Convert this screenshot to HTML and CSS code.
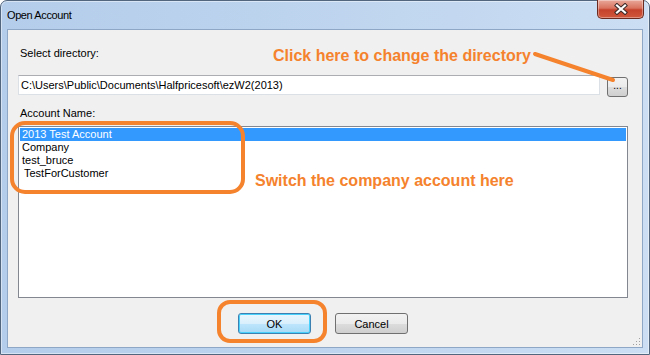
FILE: index.html
```html
<!DOCTYPE html>
<html lang="en">
<head>
    <meta charset="UTF-8">
    <title>Open Account</title>
    <link rel="stylesheet" href="styles.css">
</head>
<body>
    <div class="window">
        <div class="titlebar">
            <span class="title">Open Account</span>
            <button class="close" aria-label="Close">
                <svg width="16" height="12" viewBox="0 0 16 12">
                    <path d="M4 2.5 L12 9.5 M12 2.5 L4 9.5" stroke="#3d2a28" stroke-width="4.2" stroke-linecap="square" fill="none"/>
                    <path d="M4 2.5 L12 9.5 M12 2.5 L4 9.5" stroke="#ffffff" stroke-width="2.2" stroke-linecap="square" fill="none"/>
                </svg>
            </button>
        </div>

        <div class="client">
            <label class="label">Select directory:</label>
            <div class="dir-row">
                <div class="textbox">C:\Users\Public\Documents\Halfpricesoft\ezW2(2013)</div>
                <button class="browse">...</button>
            </div>

            <label class="label label-account">Account Name:</label>
            <ul class="listbox">
                <li class="selected">2013 Test Account</li>
                <li>Company</li>
                <li>test_bruce</li>
                <li class="indent">TestForCustomer</li>
            </ul>

            <div class="actions">
                <button class="btn btn-default">OK</button>
                <button class="btn">Cancel</button>
            </div>

            <svg class="grip" width="9" height="9" viewBox="0 0 9 9">
                <rect x="7" y="1" width="1" height="1" fill="#a0a0a0"/>
                <rect x="4" y="4" width="1" height="1" fill="#a0a0a0"/>
                <rect x="7" y="4" width="1" height="1" fill="#a0a0a0"/>
                <rect x="1" y="7" width="1" height="1" fill="#a0a0a0"/>
                <rect x="4" y="7" width="1" height="1" fill="#a0a0a0"/>
                <rect x="7" y="7" width="1" height="1" fill="#a0a0a0"/>
            </svg>
        </div>

        <!-- orange callouts drawn over the dialog -->
        <div class="note note-dir">Click here to change the directory</div>
        <div class="note note-list">Switch the company account here</div>
        <svg class="marks" width="650" height="355" viewBox="0 0 650 355">
            <line x1="535" y1="54" x2="613" y2="80" stroke="#f5822d" stroke-width="4" stroke-linecap="round"/>
            <rect x="12" y="123" width="231" height="69" rx="13" fill="none" stroke="#f5822d" stroke-width="4"/>
            <rect x="219" y="302" width="106" height="39" rx="11" fill="none" stroke="#f5822d" stroke-width="4"/>
        </svg>
    </div>
</body>
</html>
```

FILE: styles.css
```css
body {
    margin: 0;
    background: #fff;
    font-family: "Liberation Sans", Arial, sans-serif;
}

.window {
    position: relative;
    width: 650px;
    height: 355px;
    box-sizing: border-box;
    display: flex;
    flex-direction: column;
    padding: 0 6px 6px;
    border: 1px solid #52667e;
    border-radius: 7px 7px 0 0;
    background: linear-gradient(90deg, #b4cdea 0%, #bcd3ee 40%, #c3d8f0 70%, #cbdef3 100%);
    box-shadow: inset 0 0 0 1px rgba(255, 255, 255, 0.45);
}

.titlebar {
    height: 28px;
    display: flex;
    justify-content: space-between;
    align-items: flex-start;
    flex-shrink: 0;
}

.title {
    margin-top: 8px;
    font-size: 11px;
    letter-spacing: -0.4px;
    color: #000;
}

.close {
    width: 47px;
    height: 19px;
    margin: -1px -1px 0 0;
    padding: 0;
    display: flex;
    align-items: center;
    justify-content: center;
    border: 1px solid #6b2a1f;
    border-top: none;
    border-radius: 0 0 5px 5px;
    background: linear-gradient(#e9a99a 0%, #d9735f 45%, #c5412b 55%, #d0583c 100%);
    box-shadow: inset 0 0 0 1px rgba(255, 255, 255, 0.35);
}

.client {
    position: relative;
    flex: 1;
    padding: 17px 14px 0 10px;
    background: #f0f0f0;
    border: 1px solid #8ea7c6;
    font-size: 11px;
    color: #000;
}

.label {
    display: block;
    height: 13px;
    line-height: 13px;
    padding-left: 2px;
}

.dir-row {
    display: flex;
    gap: 7px;
    margin-top: 15px;
}

.textbox {
    flex: 1;
    height: 20px;
    box-sizing: border-box;
    padding: 0 2px;
    line-height: 18px;
    background: #fff;
    border: 1px solid #dbdfe6;
    border-top-color: #abadb3;
    white-space: nowrap;
}

.browse {
    width: 21px;
    height: 20px;
    margin-top: 2px;
    padding: 0 0 4px;
    border: 1px solid #707070;
    border-radius: 3px;
    background: linear-gradient(#f2f2f2 0%, #ebebeb 50%, #dddddd 51%, #cfcfcf 100%);
    font: 10px "Liberation Sans", Arial, sans-serif;
    color: #000;
}

.label-account {
    margin-top: 10px;
}

.listbox {
    list-style: none;
    margin: 6px 0 0;
    padding: 1px;
    height: 172px;
    box-sizing: border-box;
    background: #fff;
    border: 1px solid #828790;
}

.listbox li {
    height: 13px;
    line-height: 13px;
    padding-left: 2px;
    white-space: nowrap;
}

.listbox li.indent {
    padding-left: 4px;
}

.listbox li.selected {
    background: #3399ff;
    color: #fff;
}

.actions {
    display: flex;
    justify-content: center;
    gap: 24px;
    margin-top: 15px;
}

.btn {
    width: 73px;
    height: 21px;
    padding: 0;
    border: 1px solid #707070;
    border-radius: 3px;
    background: linear-gradient(#f2f2f2 0%, #ebebeb 50%, #dddddd 51%, #cfcfcf 100%);
    font: 11px "Liberation Sans", Arial, sans-serif;
    color: #000;
}

.btn-default {
    border-color: #3c7fb1;
    box-shadow: inset 0 0 0 1px #48d2fb;
    background: linear-gradient(#eaf6fd 0%, #d9f0fc 50%, #bee6fd 51%, #a7d9f5 100%);
}

.grip {
    position: absolute;
    right: 1px;
    bottom: 1px;
}

.note {
    position: absolute;
    font-size: 16px;
    font-weight: bold;
    line-height: 18px;
    color: #f5822d;
    white-space: nowrap;
}

.note-dir {
    left: 272px;
    top: 46px;
}

.note-list {
    left: 254px;
    top: 171px;
}

.marks {
    position: absolute;
    left: -1px;
    top: -1px;
    pointer-events: none;
}
```
